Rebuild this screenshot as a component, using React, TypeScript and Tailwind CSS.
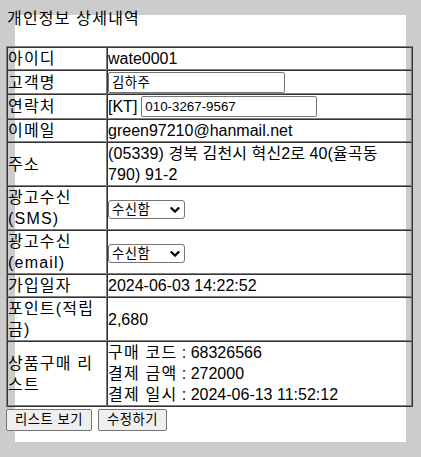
import { useState } from 'react'

const cell =
  'border border-[#808080] border-t-[#333333] border-l-[#333333] p-0 align-middle'

const labelCell = `${cell} w-[100px] tracking-[1.2px]`

function Chevron() {
  return (
    <svg
      className="pointer-events-none absolute right-[5px] top-[7px]"
      width="10"
      height="6"
      viewBox="0 0 10 6"
      fill="none"
      stroke="#000"
      strokeWidth="2.2"
      strokeLinecap="square"
    >
      <polyline points="1.5,1.2 5,4.6 8.5,1.2" />
    </svg>
  )
}

function OptSelect() {
  const [value, setValue] = useState('Y')
  return (
    <span className="relative inline-block align-middle">
      <select
        value={value}
        onChange={(e) => setValue(e.target.value)}
        className="block h-[19px] w-[77px] appearance-none rounded-[3px] border border-[#767676] bg-white pl-[3px] text-[13.33px] leading-[15px] tracking-[0.5px]"
      >
        <option value="Y">수신함</option>
        <option value="N">수신안함</option>
      </select>
      <Chevron />
    </span>
  )
}

export default function App() {
  const [name, setName] = useState('김하주')
  const [phone, setPhone] = useState('010-3267-9567')

  return (
    <div className="min-h-[457px] bg-[#cccccc] p-[15px] font-['Liberation_Sans','Noto_Sans_CJK_KR',sans-serif] text-[16px] leading-[21px] text-black">
      <div className="flow-root h-[427px] w-[391px] bg-white">
        <div className="-ml-[9px] -mt-[7px] w-[407px]">
          <p className="pl-px tracking-[1.2px]">개인정보 상세내역</p>

          <table className="mt-[17px] w-[407px] border-separate border-spacing-0 border border-[#333333] border-t-[#808080] border-l-[#808080]">
            <tbody>
              <tr>
                <td className={labelCell}>아이디</td>
                <td className={cell}>wate0001</td>
              </tr>
              <tr>
                <td className={`${labelCell} h-[24px]`}>고객명</td>
                <td className={cell}>
                  <input
                    value={name}
                    onChange={(e) => setName(e.target.value)}
                    className="block h-[21px] w-[177px] rounded-[2px] border border-[#767676] bg-white px-[3px] text-[13.33px] tracking-[0.5px]"
                  />
                </td>
              </tr>
              <tr>
                <td className={`${labelCell} h-[25px]`}>연락처</td>
                <td className={cell}>
                  <div className="flex items-center gap-[4px]">
                    <span>[KT]</span>
                    <input
                      value={phone}
                      onChange={(e) => setPhone(e.target.value)}
                      className="block h-[21px] w-[176px] rounded-[2px] border border-[#767676] bg-white px-[3px] text-[13.33px]"
                    />
                  </div>
                </td>
              </tr>
              <tr>
                <td className={labelCell}>이메일</td>
                <td className={cell}>green97210@hanmail.net</td>
              </tr>
              <tr>
                <td className={labelCell}>주소</td>
                <td className={`${cell} tracking-[0.1px]`}>
                  (05339) 경북 김천시 혁신2로 40(율곡동 790) 91-2
                </td>
              </tr>
              <tr>
                <td className={labelCell}>광고수신(SMS)</td>
                <td className={cell}>
                  <OptSelect />
                </td>
              </tr>
              <tr>
                <td className={labelCell}>광고수신(email)</td>
                <td className={cell}>
                  <OptSelect />
                </td>
              </tr>
              <tr>
                <td className={labelCell}>가입일자</td>
                <td className={cell}>2024-06-03 14:22:52</td>
              </tr>
              <tr>
                <td className={labelCell}>포인트(적립금)</td>
                <td className={cell}>2,680</td>
              </tr>
              <tr>
                <td className={labelCell}>상품구매 리스트</td>
                <td className={cell}>
                  <div>
                    <span className="tracking-[1.2px]">구매 코드</span> : 68326566
                  </div>
                  <div>
                    <span className="tracking-[1.2px]">결제 금액</span> : 272000
                  </div>
                  <div>
                    <span className="tracking-[1.2px]">결제 일시</span> : 2024-06-13 11:52:12
                  </div>
                </td>
              </tr>
            </tbody>
          </table>

          <div className="mt-[2px] flex gap-[6px]">
            <button className="h-[22px] w-[86px] rounded-[2px] border border-[#767676] bg-[#efefef] text-[13.33px] leading-[16px] tracking-[0.5px]">
              리스트 보기
            </button>
            <button className="h-[22px] w-[69px] rounded-[2px] border border-[#767676] bg-[#efefef] text-[13.33px] leading-[16px] tracking-[0.5px]">
              수정하기
            </button>
          </div>
        </div>
      </div>
    </div>
  )
}
